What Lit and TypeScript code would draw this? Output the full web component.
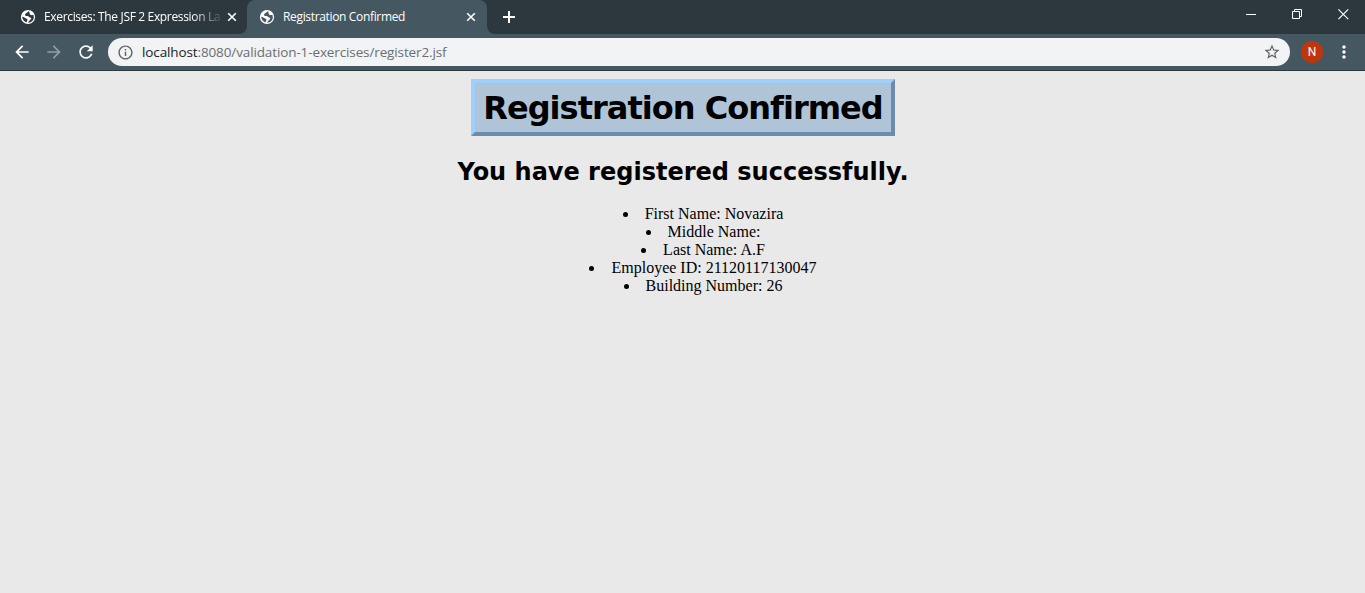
import { LitElement, html, css, svg } from "lit";
import { customElement } from "lit/decorators.js";

const globe = html`<svg class="globe" width="16" height="16" viewBox="0 0 16 16">
  <circle cx="8" cy="8" r="7.1" fill="#fff" />
  <path class="land" d="M9.2 2.3C7.9 2.4 7.6 3.5 6.6 3.9C5.6 4.3 5.1 5 5.1 5.9C5.3 6.9 6.4 7.1 7.6 7C8.9 7 8.9 8.4 10.3 8.4C11.5 8.6 11.4 10 10.6 10.6C9.6 11.3 9.3 12.4 7.9 13.6C11.6 13.8 14 11 13.8 8C13.8 7.3 13.6 6.5 13.2 5.8C12.1 6.5 10.4 6 9.9 5.2C9.4 4.4 9.4 3.4 9.2 2.3ZM2.2 7.8C2.3 10.4 4 12.6 6.5 13.4L7.1 11.7C7.7 10.9 7.6 10 6.6 9.7C5.1 9.5 4.5 7.8 2.2 7.8Z" />
</svg>`;

const cross = html`<svg width="10" height="10" viewBox="0 0 10 10">
  <path d="M1.2 1.2L8.8 8.8M8.8 1.2L1.2 8.8" fill="none" stroke="#fff" stroke-width="1.6" />
</svg>`;

const glyph = (d: string, color: string, size = 20) => html`<svg width=${size} height=${size} viewBox="0 0 24 24">
  ${svg`<path d=${d} fill=${color} />`}
</svg>`;

const BACK = "M20 11H7.83l5.59-5.59L12 4l-8 8 8 8 1.41-1.41L7.83 13H20v-2z";
const FORWARD = "M12 4l-1.41 1.41L16.17 11H4v2h12.17l-5.58 5.59L12 20l8-8z";
const RELOAD = "M17.65 6.35C16.2 4.9 14.21 4 12 4c-4.42 0-7.99 3.58-7.99 8s3.57 8 7.99 8c3.73 0 6.84-2.55 7.73-6h-2.08c-.82 2.33-3.04 4-5.65 4-3.31 0-6-2.69-6-6s2.69-6 6-6c1.66 0 3.14.69 4.22 1.78L13 11h7V4l-2.35 2.35z";
const INFO = "M11 17h2v-6h-2v6zm1-15C6.48 2 2 6.48 2 12s4.48 10 10 10 10-4.48 10-10S17.52 2 12 2zm0 18c-4.41 0-8-3.59-8-8s3.59-8 8-8 8 3.59 8 8-3.59 8-8 8zM11 9h2V7h-2v2z";
const STAR = "M22 9.24l-7.19-.62L12 2 9.19 8.63 2 9.24l5.46 4.73L5.82 21 12 17.27 18.18 21l-1.63-7.03L22 9.24zM12 15.4l-3.76 2.27 1-4.28-3.32-2.88 4.38-.38L12 6.1l1.71 4.04 4.38.38-3.32 2.88 1 4.28L12 15.4z";
const MORE = "M12 8c1.1 0 2-.9 2-2s-.9-2-2-2-2 .9-2 2 .9 2 2 2zm0 2c-1.1 0-2 .9-2 2s.9 2 2 2 2-.9 2-2-.9-2-2-2zm0 6c-1.1 0-2 .9-2 2s.9 2 2 2 2-.9 2-2-.9-2-2-2z";

@customElement("browser-tabs")
class BrowserTabs extends LitElement {
  static styles = css`
    :host { display: flex; height: 34px; background: #2d383e; color: #fff; font: 12px "Open Sans", sans-serif; }
    svg { display: block; flex: none; }
    .tab { display: flex; align-items: center; box-sizing: border-box; height: 34px; }
    .rear { width: 247px; padding-left: 20px; border-bottom-right-radius: 8px; background: #2d383e; }
    .front { width: 240px; padding-left: 12px; border-radius: 8px 8px 0 0; background: #455761; }
    .strip { display: flex; background: linear-gradient(#2d383e 50%, #455761 50%); }
    .land { fill: #2d383e; }
    .front .land { fill: #455761; }
    .title { margin-left: 8px; width: 176px; white-space: nowrap; letter-spacing: -0.34px; line-height: 18px; }
    .rear .title { mask-image: linear-gradient(90deg, #000 148px, transparent 180px); }
    .close { margin-left: 7px; }
    .rest { flex: 1; display: flex; border-bottom-left-radius: 8px; background: #2d383e; }
    .plus { margin: 11px 0 0 16px; }
    .window { display: flex; margin-left: auto; }
    .control { width: 46px; padding-top: 8px; display: flex; justify-content: center; }
    .control svg { margin-left: 3px; }
    .tail { flex: 1; display: flex; background: linear-gradient(#2d383e 50%, #455761 50%); }
  `;
  render() {
    return html`
      <div class="strip">
        <div class="tab rear">${globe}<span class="title">Exercises: The JSF 2 Expression La</span><span class="close">${cross}</span></div>
        <div class="tab front">${globe}<span class="title">Registration Confirmed</span><span class="close">${cross}</span></div>
      </div>
      <div class="tail"><div class="rest">
        <svg class="plus" width="12" height="12" viewBox="0 0 12 12"><path d="M6 0V12M0 6H12" stroke="#fff" stroke-width="2" /></svg>
        <div class="window">
          <div class="control"><svg width="11" height="12" viewBox="0 0 11 12"><path d="M0 6.5H10" stroke="#fff" /></svg></div>
          <div class="control"><svg width="11" height="12" viewBox="0 0 11 12"><path d="M.5 3.5H7.5V10.5H.5ZM2.5 3.5V1.5H9.5V8.5H7.5" fill="none" stroke="#fff" /></svg></div>
          <div class="control"><svg width="11" height="12" viewBox="0 0 11 12"><path d="M.4 1.4L10.2 11.2M10.2 1.4L.4 11.2" stroke="#fff" stroke-width="1.2" /></svg></div>
        </div>
      </div></div>`;
  }
}

@customElement("browser-toolbar")
class BrowserToolbar extends LitElement {
  static styles = css`
    :host { display: flex; align-items: center; box-sizing: border-box; height: 37px; padding: 0 11px 0 12px; background: #455761; border-bottom: 1px solid #2d383e; }
    svg { display: block; flex: none; }
    .nav { display: flex; gap: 12px; }
    .field { display: flex; align-items: center; flex: 1; box-sizing: border-box; height: 28px; margin: 0 11px 0 12px; padding: 0 9px; border-radius: 14px; background: #f1f3f4; }
    .url { flex: 1; margin-left: 8px; font: 13.5px/20px "Open Sans", sans-serif; letter-spacing: -0.12px; color: #6b6f73; }
    .host { color: #202124; }
    .avatar { width: 22px; height: 22px; margin-right: 11px; border-radius: 50%; background: #bf360c; color: #fff; font: 12px/22px Roboto, sans-serif; text-align: center; }
  `;
  render() {
    return html`
      <div class="nav">${glyph(BACK, "#fff")}${glyph(FORWARD, "#929ca1")}${glyph(RELOAD, "#fff")}</div>
      <div class="field">${glyph(INFO, "#5f6368", 17)}<span class="url"><span class="host">localhost</span>:8080/validation-1-exercises/register2.jsf</span>${glyph(STAR, "#5f6368", 18)}</div>
      <div class="avatar">N</div>
      ${glyph(MORE, "#fff")}`;
  }
}

@customElement("app-root")
class AppRoot extends LitElement {
  static styles = css`
    :host { display: block; box-sizing: border-box; height: 593px; overflow: hidden; background: #e9e9e9; color: #000; font: 16px/18px "Liberation Serif", serif; }
    .page { display: flex; flex-direction: column; align-items: center; padding: 8px 8px 0; text-align: center; }
    .banner { box-sizing: border-box; width: 424px; height: 57px; border: 4px solid; border-color: #9fcffb #6b8dab #6b8dab #9fcffb; background: #b0c4d8; }
    .banner-text { display: block; margin: 0; padding-left: 1px; font: bold 32px/51px "DejaVu Sans", Verdana, sans-serif; letter-spacing: -0.98px; white-space: nowrap; }
    .message { margin: 22px 0 0 1px; font: bold 24px/29px "DejaVu Sans", Verdana, sans-serif; white-space: nowrap; }
    .details { align-self: stretch; margin: 18px 0 0; padding: 0 0 0 41px; list-style: disc inside; }
  `;
  render() {
    const rows = ["First Name: Novazira", "Middle Name:", "Last Name: A.F", "Employee ID: 21120117130047", "Building Number: 26"];
    return html`
      <browser-tabs></browser-tabs>
      <browser-toolbar></browser-toolbar>
      <main class="page">
        <div class="banner"><h1 class="banner-text">Registration Confirmed</h1></div>
        <h2 class="message">You have registered successfully.</h2>
        <ul class="details">${rows.map((row) => html`<li>${row}</li>`)}</ul>
      </main>`;
  }
}
